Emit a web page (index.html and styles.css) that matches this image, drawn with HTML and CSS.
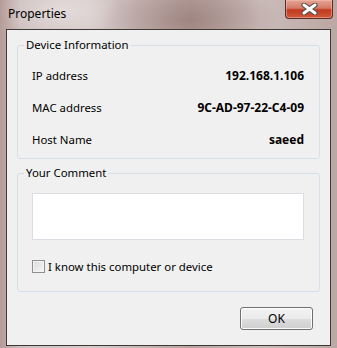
FILE: index.html
```html
<!DOCTYPE html>
<html lang="en">
<head>
    <meta charset="UTF-8">
    <meta name="viewport" content="width=device-width, initial-scale=1.0">
    <title>Properties</title>
    <link rel="stylesheet" href="styles.css">
</head>
<body>
    <div class="window">
        <div class="titlebar">
            <span class="title">Properties</span>
            <button class="close-btn" aria-label="Close">
                <svg width="17" height="12" viewBox="0 0 17 12">
                    <path d="M3 2 L14 10 M14 2 L3 10" stroke="#4a4a4a" stroke-width="5" stroke-linecap="round"/>
                    <path d="M3 2 L14 10 M14 2 L3 10" stroke="#ffffff" stroke-width="3" stroke-linecap="round"/>
                </svg>
            </button>
        </div>
        <div class="client">
            <fieldset class="group">
                <legend>Device Information</legend>
                <div class="info-row">
                    <span>IP address</span>
                    <b>192.168.1.106</b>
                </div>
                <div class="info-row">
                    <span>MAC address</span>
                    <b>9C-AD-97-22-C4-09</b>
                </div>
                <div class="info-row">
                    <span>Host Name</span>
                    <b>saeed</b>
                </div>
            </fieldset>
            <fieldset class="group comment-group">
                <legend>Your Comment</legend>
                <textarea class="comment"></textarea>
                <label class="check-row">
                    <input type="checkbox" class="check">
                    I know this computer or device
                </label>
            </fieldset>
            <div class="actions">
                <button class="ok-btn">OK</button>
            </div>
        </div>
    </div>
</body>
</html>
```

FILE: styles.css
```css
body {
    margin: 0;
    font-family: "Noto Sans", "Open Sans", sans-serif;
    font-size: 11.4px;
    color: #000;
}
.window {
    width: 337px;
    height: 348px;
    box-sizing: border-box;
    padding: 0 6px 2px 6px;
    display: flex;
    flex-direction: column;
    background:
        radial-gradient(ellipse 90px 40px at 190px 20px, rgba(140, 110, 105, 0.55), transparent),
        radial-gradient(ellipse 60px 30px at 60px 10px, rgba(245, 240, 240, 0.5), transparent),
        linear-gradient(90deg, #b59c98 0, #cdbfbe 20px, #d6cbca 90px, #b8a3a0 190px, #cbbcba 260px, #bba7a4 337px);
}
.titlebar {
    height: 29px;
    display: flex;
    align-items: flex-start;
    justify-content: space-between;
}
.title {
    margin-top: 6px;
    margin-left: 2px;
    line-height: 16px;
    font-size: 12px;
}
.close-btn {
    width: 48px;
    height: 19px;
    margin-right: -2px;
    padding: 0;
    border: 1px solid #5a2d26;
    border-top: none;
    border-radius: 0 0 4px 4px;
    background: linear-gradient(#e3a595 0, #d57a66 45%, #c2391f 55%, #cf5a3a 100%);
    box-shadow: inset 0 0 0 1px rgba(255, 200, 190, 0.45);
    display: flex;
    align-items: center;
    justify-content: center;
}
.client {
    flex: 1;
    border: 1px solid #3f3938;
    background-color: #f0f0f0;
    padding: 7px 10px 0 10px;
    display: flex;
    flex-direction: column;
}
.group {
    margin: 0;
    padding: 6px 15px 3px 14px;
    border: 1px solid #d5dfe5;
    border-radius: 3px;
}
.group legend {
    padding: 0 2px;
    margin-left: -8px;
    line-height: 16px;
}
.info-row {
    display: flex;
    justify-content: space-between;
    align-items: center;
    height: 32px;
}
.info-row b {
    font-size: 12px;
}
.comment-group {
    margin-top: 6px;
    padding: 12px 15px 17px 14px;
}
.comment {
    display: block;
    width: 272px;
    height: 47px;
    box-sizing: border-box;
    margin: 0 0 18px 0;
    border: 1px solid #dadee2;
    background: #fff;
    resize: none;
}
.check-row {
    display: flex;
    align-items: center;
    height: 16px;
}
.check {
    appearance: none;
    width: 13px;
    height: 13px;
    margin: 0 3px 0 0;
    border: 1px solid #8e8f8f;
    background: linear-gradient(135deg, #dcdcdc, #f6f6f6);
    box-shadow: inset 0 0 0 1px #f4f4f4;
}
.actions {
    display: flex;
    justify-content: flex-end;
    padding: 15px 7px 0 0;
}
.ok-btn {
    width: 73px;
    height: 23px;
    border: 1px solid #707070;
    border-radius: 3px;
    background: linear-gradient(#f2f2f2 0, #ebebeb 50%, #dddddd 50%, #cfcfcf 100%);
    box-shadow: inset 0 0 0 1px #fcfcfc;
    font-family: inherit;
    font-size: 12px;
    color: #000;
    padding: 0;
}
```
